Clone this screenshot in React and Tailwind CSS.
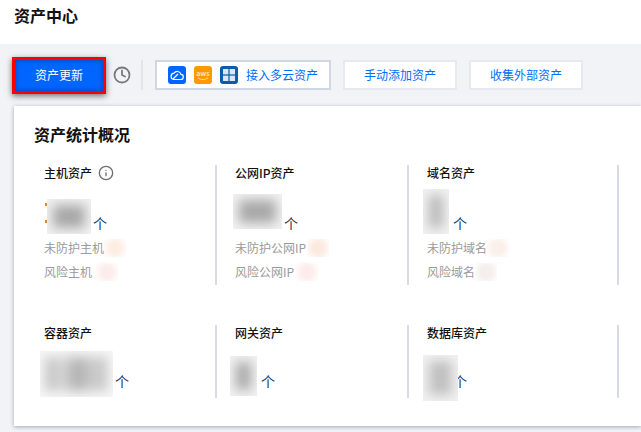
import React from "react";
import { Clock, Info } from "lucide-react";

const font = { fontFamily: '"Noto Sans CJK SC", "Noto Sans", sans-serif' };

function Patch({ w, h, ml = 0, mb = 0, inner = "#a8a8a8", bg = "#f2f2f2", children }) {
  return (
    <div className="relative shrink-0" style={{ width: w, height: h, marginLeft: ml, marginBottom: mb }}>
      <div className="absolute inset-0 overflow-hidden" style={{ background: bg }}>
        <div className="absolute inset-[6px] blur-[6px]" style={{ background: inner }} />
      </div>
      {children}
    </div>
  );
}

function Tint({ color, ml = 1 }) {
  return (
    <span
      className="inline-block h-[18px] w-[22px]"
      style={{ marginLeft: ml, background: `radial-gradient(circle, ${color} 35%, #ffffff 100%)` }}
    />
  );
}

function Stat({ title, info, patch, gap = 2, sub, second, className }) {
  return (
    <div className={className}>
      <div className="flex h-4 items-center gap-[6px] text-xs font-medium leading-4 text-[#111]">
        {title}
        {info && <Info size={16} strokeWidth={2} className="text-[#6f6f6f]" />}
      </div>
      <div className={`flex items-end ${second ? "h-[51px]" : "h-[53px]"}`}>
        {patch}
        <span className="mb-[3px] text-sm leading-4 text-[#1c3550]" style={{ marginLeft: gap }}>个</span>
      </div>
      {sub && (
        <div className="mt-[2px] text-xs leading-6 text-[#9a9a9a]">
          {sub.map(([label, color, ml]) => (
            <div key={label} className="flex h-6 items-center">
              {label}
              <Tint color={color} ml={ml} />
            </div>
          ))}
        </div>
      )}
    </div>
  );
}

function LinkButton({ children }) {
  return (
    <button className="ml-3 flex h-[30px] w-[114px] items-center justify-center border-2 border-[#e6e9f0] bg-white text-xs text-[#006eff]">
      {children}
    </button>
  );
}

export default function App() {
  const middle = "w-[192px] border-l-2 border-[#d8dbe5] pl-[18px]";
  const last = "w-[212px] border-x-2 border-[#d8dbe5] pl-[18px]";
  return (
    <div className="h-[432px] w-[641px] overflow-hidden bg-[#f2f3f7]" style={font}>
      <header className="flex h-11 items-start bg-white pl-[14px] pt-[3px] text-base font-bold leading-6 text-[#111]">
        资产中心
      </header>

      <div className="flex h-[62px] items-center pl-3">
        <button className="flex h-[37px] w-[94px] items-center justify-center border-[3px] border-[#ff0000] bg-[#0066ff] text-xs text-white shadow-[0_2px_6px_rgba(0,0,0,0.55),inset_0_0_5px_rgba(0,40,110,0.6)]">
          资产更新
        </button>
        <Clock size={18} strokeWidth={2.4} className="ml-[7px] text-[#7a7a7a]" />
        <div className="ml-[10px] h-[30px] w-[2px] bg-[#e2e4ea]" />
        <button className="ml-3 flex h-[30px] w-[176px] items-center border-2 border-[#cfd6e4] bg-white pl-[11px] text-xs text-[#006eff]">
          <span className="flex h-[18px] w-[18px] items-center justify-center rounded-[3px] bg-[#0066ff]">
            <svg width="14" height="12" viewBox="0 0 14 12" fill="none" stroke="#fff" strokeWidth="1.2">
              <path d="M3.5 10.5h7a2.6 2.6 0 0 0 .4-5.2A3.8 3.8 0 0 0 4 4.2 3.2 3.2 0 0 0 3.5 10.5z" />
              <path d="M3 10l5-5" />
            </svg>
          </span>
          <span className="ml-2 flex h-[18px] w-[18px] flex-col items-center justify-center rounded-[3px] bg-[#ff9900]">
            <span className="text-[7px] font-bold leading-[7px] text-[#ffe3b3]">aws</span>
            <svg width="12" height="4" viewBox="0 0 12 4" fill="none" stroke="#ffe3b3" strokeWidth="1">
              <path d="M1 .8c3 2.4 7 2.4 10 0" />
            </svg>
          </span>
          <span className="ml-2 flex h-[18px] w-[18px] items-center justify-center rounded-[3px] bg-[#0b5cab]">
            <svg width="12" height="12" viewBox="0 0 12 12" fill="#dbe7f5">
              <rect x="0" y="0" width="5.4" height="5.4" />
              <rect x="6.6" y="0" width="5.4" height="5.4" />
              <rect x="0" y="6.6" width="5.4" height="5.4" />
              <rect x="6.6" y="6.6" width="5.4" height="5.4" />
            </svg>
          </span>
          <span className="ml-2">接入多云资产</span>
        </button>
        <LinkButton>手动添加资产</LinkButton>
        <LinkButton>收集外部资产</LinkButton>
      </div>

      <section className="ml-[14px] h-[320px] bg-white pl-5 pt-[20px] shadow-[0_1px_4px_rgba(60,70,110,0.45)]">
        <h2 className="-mt-[2px] text-base font-bold leading-5 text-[#111]">资产统计概况</h2>

        <div className="mt-[21px] flex h-[120px]">
          <Stat
            className="w-[181px] pl-[10px]"
            title="主机资产"
            info
            patch={
              <Patch w={44} h={35} ml={3}>
                <span className="absolute -left-[2px] top-[4px] h-[3px] w-[2px] bg-[#d98a2b]" />
                <span className="absolute -left-[2px] top-[21px] h-[3px] w-[2px] bg-[#d98a2b]" />
              </Patch>
            }
            sub={[["未防护主机", "#fdeee4", 0], ["风险主机", "#fdecec", 4]]}
          />
          <Stat
            className={middle}
            title="公网IP资产"
            patch={<Patch w={49} h={35} ml={-2} mb={5} />}
            sub={[["未防护公网IP", "#fdeadf", 1], ["风险公网IP", "#fdecec", 2]]}
          />
          <Stat
            className={last}
            title="域名资产"
            patch={<Patch w={26} h={45} ml={-4} inner="#b8b8b8" />}
            gap={4}
            sub={[["未防护域名", "#fbefea", 0], ["风险域名", "#f5eeee", 0]]}
          />
        </div>

        <div className="mt-[40px] flex h-[73px]">
          <Stat
            className="w-[181px] pl-[10px]"
            title="容器资产"
            second
            patch={<Patch w={73} h={46} ml={-4} mb={-5} inner="linear-gradient(90deg,#b4b4b4,#dcdcdc 25%,#aeaeae 50%,#cfcfcf 80%,#bdbdbd)" bg="#f7f7f7" />}
          />
          <Stat
            className={middle}
            title="网关资产"
            second
            patch={<Patch w={27} h={40} ml={-5} mb={-4} inner="#a8a8a8" />}
            gap={4}
          />
          <Stat
            className={last}
            title="数据库资产"
            second
            patch={<Patch w={35} h={46} ml={-4} mb={-9} inner="#c0c0c0" />}
            gap={-5}
          />
        </div>
      </section>
    </div>
  );
}
